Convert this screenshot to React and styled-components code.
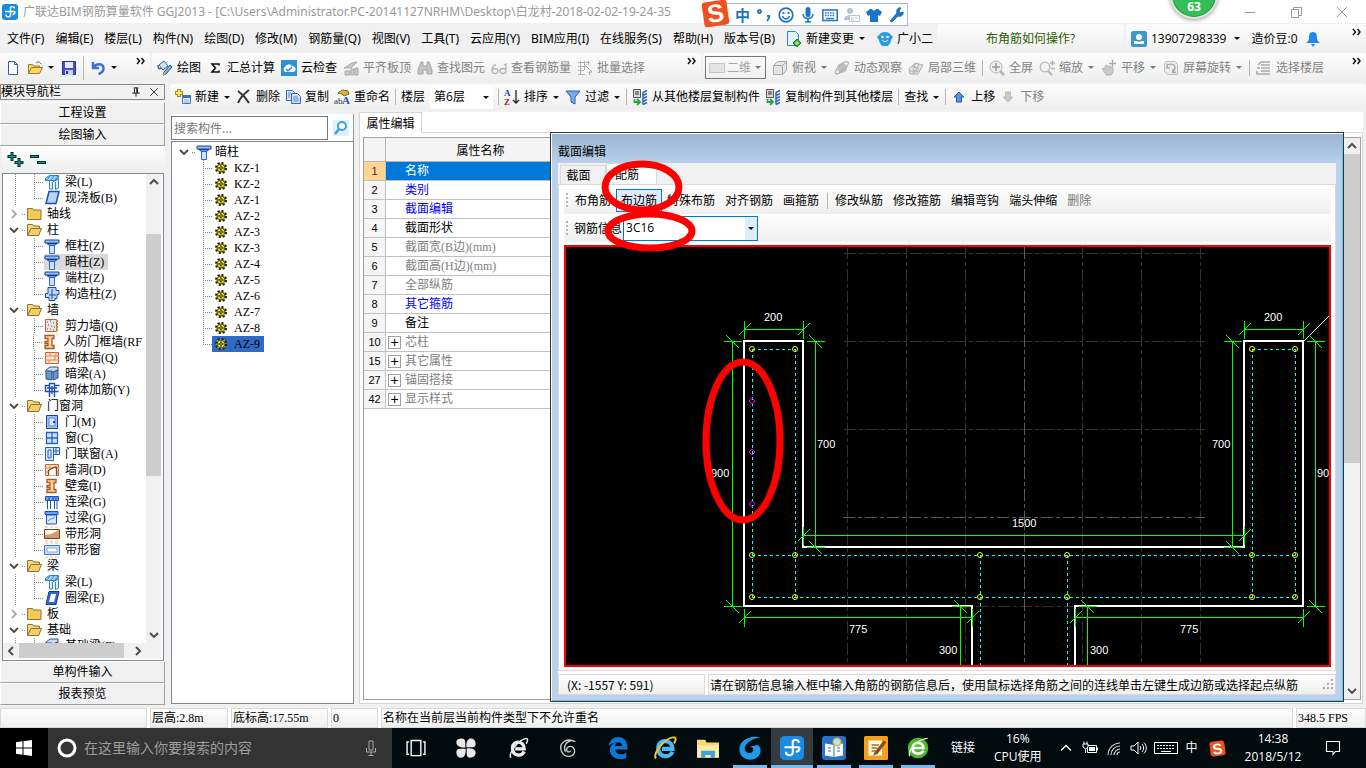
import styled, { createGlobalStyle } from 'styled-components';

const ui = '"Open Sans", "Noto Sans CJK SC", sans-serif';
const wide = '"Noto Sans", "Noto Sans CJK SC", sans-serif';
const song = '"Liberation Serif", "Noto Sans CJK SC", serif';

const GlobalStyle = createGlobalStyle`
  * { box-sizing: border-box; }
  body { margin: 0; background: #f0f0f0; overflow: hidden; }
  button, input, select { font: inherit; color: inherit; margin: 0; padding: 0; border: 0; background: none; border-radius: 0; }
  ul { list-style: none; margin: 0; padding: 0; }
  svg { display: block; flex: none; }
`;

/* ---------- icons ---------- */

const column = (
  <>
    <path d="M1 2h14v3H1z" fill="#9cc3f5" stroke="#16419c" />
    <path d="M3 5.500h10l-2 2H5z" fill="#5f93e6" stroke="#16419c" />
    <path d="M5.500 7.500h5v8h-5z" fill="#cfe2ff" stroke="#2d66c9" />
  </>
);
const brick = (
  <>
    <path d="M1.500 2.500h13v11h-13z" fill="#fde3cd" stroke="#c4602c" />
    <path d="M1 6h14M1 10h14M6 2v4M11 6v4M5 10v4M12 2v4" stroke="#d98350" />
  </>
);
const beam = (
  <>
    <path d="M1.500 4l4-2.500h9v3l-3 2h-10z" fill="#a9d6f7" stroke="#2a7fc4" />
    <path d="M5.500 7v8h3V8l6-3v9l-3 1.500V8" fill="#dff0fc" stroke="#2a7fc4" />
    <path d="M3 6l3-4M7 6l3-4M11 6l3-4" stroke="#2a7fc4" />
  </>
);

const icons = {
  app: (
    <>
      <rect width="16" height="16" rx="3" fill="#1b8be0" />
      <path d="M8.500 3v8c0 2.500-4.500 2.500-4.500-.5M3 7.500h10M8.500 3.500c1-1.500 4-1 4 1M13 7.500c0 2-1 3-2.500 3" fill="none" stroke="#fff" strokeWidth="1.400" />
    </>
  ),
  newDoc: <path d="M3.500 1.500h6l3 3v10h-9zM9.500 1.500v3h3" fill="#fff" stroke="#3b5b93" />,
  open: (
    <>
      <path d="M1.500 13V4.500h4l1 1.500h6v2" fill="#f9d675" stroke="#a8791b" />
      <path d="M1.500 13.500l3-6h11l-3 6z" fill="#ffd466" stroke="#a8791b" />
      <path d="M9 3c2-2 4-1 5 1" fill="none" stroke="#555" />
    </>
  ),
  save: (
    <>
      <path d="M1.500 1.500h13v13h-13z" fill="#4a4fc4" stroke="#2b2f8f" />
      <path d="M4 2h8v6H4z" fill="#e7eafc" />
      <path d="M4 10h8v5H4z" fill="#c9cdf5" /><path d="M5 11h2v3H5z" fill="#2b2f8f" />
    </>
  ),
  undo: <path d="M3 2v6h6M3.500 7.500c3-5 10-4 10 1 0 3-2 4.500-5 5.500" fill="none" stroke="#3d72d8" strokeWidth="2.500" />,
  paint: (
    <>
      <path d="M2 5l5-4 4 5-5 4z" fill="#cfe0f2" stroke="#44627f" />
      <path d="M1 5c0 3 1 5 3 3" fill="none" stroke="#44627f" strokeWidth="1.500" />
      <path d="M7 12l6-7 2 2-6 7-3 1z" fill="#7fb1e8" stroke="#2c568c" /><path d="M6 15l1-3 2 2z" fill="#e8bd32" />
    </>
  ),
  sigma: <path d="M12 5.500V4H5l3.500 4L5 12h7v-1.500" fill="none" stroke="#111" strokeWidth="1.600" />,
  cloud: (
    <>
      <path d="M0 0h16v16H0z" fill="#2c90d9" />
      <path d="M4 12a3 3 0 010-5 4 4 0 017-1 3 3 0 011 6z" fill="#fff" /><path d="M5 9l2 2 4-4" fill="none" stroke="#2c90d9" strokeWidth="1.500" />
    </>
  ),
  slab: <path d="M1 8l8-5 5-1-6 6zM2 11h5v4H2zM8 9h3v6H8zM12 8h3v7h-3z" fill="#c9c9c9" stroke="#a8a8a8" />,
  binoculars: <path d="M4 2h2v4h4V2h2l3 8v4h-5v-4H6v4H1v-4z" fill="#c4c4c4" stroke="#a6a6a6" />,
  glasses: <path d="M1 11a3 2.500 0 016 0 3 2.500 0 01-6 0c0-4 2-6 4-6M9 11a3 2.500 0 016 0 3 2.500 0 01-6 0M15 10V4l-2 1" fill="none" stroke="#b2b2b2" strokeWidth="1.300" />,
  batch: (
    <>
      <path d="M1 2.500h12M1 6.500h8M1 10.500h6M1 14.500h7M3.500 1v14M7.500 1v9M11.500 1v4" fill="none" stroke="#b0b0b0" />
      <path d="M9 6l6 6h-3l1 3" fill="#fff" stroke="#999" />
    </>
  ),
  flat: <path d="M.5 3.500h15v9H.5z" fill="#e3e3e3" stroke="#c4c4c4" />,
  cube: <path d="M1.500 5.500l4-4h9v9l-4 4h-9zM1.500 5.500h9v9M10.500 5.500l4-4" fill="#e4e4e4" stroke="#a9a9a9" />,
  orbit: (
    <>
      <circle cx="8" cy="8" r="5" fill="#c2c2c2" /><path d="M2 14c-3-3 8-14 12-12 2 2-7 12-12 12" fill="none" stroke="#b0b0b0" strokeWidth="1.300" />
    </>
  ),
  local3d: <path d="M1 9l6-6 8 2-5 9-8 0zM4 6l7 3M7 3l-2 11M11 4l-4 9M2 11l9 0" fill="#e2e2e2" stroke="#b0b0b0" />,
  fullView: (
    <>
      <circle cx="7" cy="7" r="6" fill="#eee" stroke="#b5b5b5" /><path d="M7 3v8M3 7h8" stroke="#999" strokeWidth="1.500" /><path d="M11 11l4 4" stroke="#b5b5b5" strokeWidth="2.500" />
    </>
  ),
  zoom: (
    <>
      <circle cx="6" cy="7" r="4.800" fill="#f5f5f5" stroke="#b8b8b8" strokeWidth="1.300" /><path d="M9 11l4 4" stroke="#b5b5b5" strokeWidth="2.300" /><path d="M11 3h5M13.500 .5v5M12 8.500h4" stroke="#b0b0b0" strokeWidth="1.500" />
    </>
  ),
  pan: (
    <>
      <path d="M1 8l3 1V6l2-1 1 2 2-1 3 2v4l-2 3H5z" fill="#c8c8c8" stroke="#b5b5b5" /><path d="M11.500 0v7M8 3.500h7" stroke="#aaa" strokeWidth="1.300" />
    </>
  ),
  rotate: (
    <>
      <path d="M3 1.500h9l2.500 3v10H5l-3.500-3V4z" fill="#eee" stroke="#bcbcbc" />
      <path d="M4 7c0-4 8-4 8 1 0 2-1 3-3 4M10 9v3.500h3M4 3.500V8h3" fill="none" stroke="#a8a8a8" strokeWidth="1.400" />
    </>
  ),
  floors: <path d="M2 5l3-3h9M5 5h9M5 8h9M1 8h3M5 11h9M1 11v3h13" fill="none" stroke="#aaa" strokeWidth="1.500" />,
  create: (
    <>
      <path d="M4 0v8M0 4h8" stroke="#a8871c" strokeWidth="4" /><path d="M4 1v6M1 4h6" stroke="#ffe95c" strokeWidth="2" />
      <path d="M7.500 6.500h8v8h-8z" fill="#eaf2fd" stroke="#3f74bd" /><path d="M7 6h9v3H7z" fill="#3f74bd" /><path d="M9 11h5M9 13h5" stroke="#7da3d4" />
    </>
  ),
  remove: <path d="M2 2c4 3 8 7 11 12M13 1C9 4 4 9 2 14" fill="none" stroke="#333" strokeWidth="2" />,
  copy: (
    <>
      <path d="M1.500 1.500h6l2 2v8h-8z" fill="#d8e6fb" stroke="#3766b1" /><path d="M6.500 4.500h6l3 3v7h-9z" fill="#d8e6fb" stroke="#3766b1" /><path d="M8 8h5M8 10h6M8 12h6M3 4h3M3 6h2M3 8h2" stroke="#5a88d0" />
    </>
  ),
  rename: (
    <>
      <path d="M4 4l4-3 6 1 1 3-5 2-2-2z" fill="#dbb443" stroke="#81661d" />
      <text x="0" y="15" fontSize="9" fontFamily="Liberation Serif" fill="#333">ab</text><text x="8" y="15" fontSize="11" fontWeight="bold" fontFamily="Liberation Serif" fill="#2753a8">A</text>
    </>
  ),
  sort: (
    <>
      <text x="0" y="7" fontSize="9" fontWeight="bold" fontFamily="Liberation Serif" fill="#1c3f9c">A</text><text x="0" y="16" fontSize="9" fontWeight="bold" fontFamily="Liberation Serif" fill="#9c1c2c">Z</text>
      <path d="M12 1v13M9 11l3 3 3-3" fill="none" stroke="#222" strokeWidth="1.300" />
    </>
  ),
  filter: <path d="M1 2h14l-5 6v7l-4-2V8z" fill="#79a9f0" stroke="#2a5cb8" />,
  copyFloor: (
    <>
      <path d="M1.500 .5h7v8h-7z" fill="#ddd" stroke="#555" /><path d="M3 3h4M3 5h4" stroke="#333" />
      <path d="M11 3.500l4-2M11 6.500l4-2M11 9.500l4-2M11 12.500l4-2M11 15.500l4-2M11 3v12.500" stroke="#2c69bd" strokeWidth="1.500" fill="none" />
      <path d="M2.500 10v3h4M5 10l3 3-3 3" fill="none" stroke="#2ea043" strokeWidth="1.800" />
    </>
  ),
  up: <path d="M8 3l5 5h-2.500v5h-5V8H3z" fill="#5c8fe8" stroke="#2a55ae" />,
  down: <path d="M8 13L3 8h2.500V3h5v5H13z" fill="#c9c9c9" stroke="#bdbdbd" />,
  change: (
    <>
      <path d="M1.500 .5h8l3 3v11h-11z" fill="#e2f3fc" stroke="#2d87b8" /><path d="M11 8l4 4-4 4-4-4z" fill="#3fae2a" stroke="#207912" /><path d="M11 10v4M9 12h4" stroke="#c7f2b8" />
    </>
  ),
  mascot: (
    <>
      <path d="M2 4c2-4 10-4 12 0l2 2-2 3c0 3-2 4-3 6H5C4 13 2 12 2 9L0 6z" fill="#2b9be0" /><circle cx="5.500" cy="6" r="1.300" fill="#fff" /><circle cx="10.500" cy="6" r="1.300" fill="#fff" /><path d="M5 9c2 2 4 2 6 0" fill="none" stroke="#fff" />
    </>
  ),
  user: (
    <>
      <rect width="16" height="16" rx="2" fill="#3d97cf" /><circle cx="8" cy="6" r="3" fill="#fff" /><path d="M3 13V10h3l2 1 2-1h3v3z" fill="#fff" />
    </>
  ),
  bell: <path d="M8 1c4 0 4 4 4 6 0 3 2 4 3 5H1c1-1 3-2 3-5 0-2 0-6 4-6zM6 13h4l-2 3z" fill="#1e88f0" />,
  search: (
    <>
      <path d="M0 0h16v16H0z" fill="#e0f1fc" /><circle cx="9" cy="6" r="4" fill="#fff" stroke="#3e9ede" strokeWidth="2" /><path d="M6 9l-4 5" stroke="#3e9ede" strokeWidth="2.500" />
    </>
  ),
  folder: <path d="M1.500 13.500v-11h5l1 1.500h7.500v9.500z" fill="#f4c95a" stroke="#94702a" />,
  folderOpen: (
    <>
      <path d="M1.500 13V2.500h5l1 1.500h6v3" fill="#f7d57c" stroke="#94702a" /><path d="M1.500 13.500L5 6.500h10.500l-3 7z" fill="#f7cf66" stroke="#94702a" />
    </>
  ),
  column,
  brick,
  beam,
  plate: <path d="M5 1.500h10l-3 12H2z" fill="#b9d2f8" stroke="#1c50ac" strokeWidth="1.500" />,
  ringBeam: (
    <>
      <path d="M5 1.500h10l-3 13H2z" fill="#3468c0" stroke="#123b8c" /><path d="M7 4h5l-2 8H5z" fill="#fff" />
    </>
  ),
  gearCol: <path d="M4 1.500h8v3h3v4h-2v4h-2v2H5v-3H1.500v-4H4z M5 9h7M8 3v10" fill="#bdd4f7" stroke="#1c4ba6" />,
  shear: (
    <>
      <path d="M1.500 1.500h11v12h-11z" fill="#e5e5e5" stroke="#c4602c" /><path d="M3 4h1M6 3h1M9 5h1M4 7h1M7 8h1M10 9h1M3 11h1M6 11h1M9 12h1" stroke="#555" /><path d="M13 2v12" stroke="#e08030" strokeWidth="2" strokeDasharray="2 1" />
    </>
  ),
  niche: <path d="M3 1.500h9v3h-2v7h2v3H3v-3h3v-2H3v-2h3v-3H3z" fill="#fbd6a8" stroke="#a65a1c" strokeWidth="1.300" />,
  hiddenBeam: (
    <>
      <path d="M2 4l4-3h8v3l-5 2H2z" fill="#c9dcf2" stroke="#29558c" /><path d="M2 5h6v9l-6-1zM9 6l5-2v8l-5 2z" fill="#6c95c4" stroke="#29558c" />
    </>
  ),
  rebarWall: <path d="M1.500 3.500h4v-2h5v2h5M1.500 9.500h13M5.500 1v14M10.500 1v14M1.500 3v7M3 6h10M8 4v8" fill="none" stroke="#1d4fb0" strokeWidth="1.400" />,
  door: (
    <>
      <path d="M2.500 1.500h11v13h-11z" fill="#9cc3f5" stroke="#16419c" /><path d="M5 4h6v8H5z" fill="#dbe9fd" stroke="#5a88d0" /><path d="M9 8h2" stroke="#16419c" strokeWidth="2" />
    </>
  ),
  win: <path d="M2.500 2.500h11v11h-11zM8 2v12M2 8h12" fill="#cfe4fb" stroke="#2565c4" strokeWidth="1.300" />,
  doorWin: <path d="M1.500 1.500h8v13h-8zM9.500 1.500h6v7h-6M12 1v7M10 5h6M4 4h3v8H4z" fill="#dbe9fd" stroke="#2461c0" />,
  wallHole: (
    <>
      {brick}
      <path d="M4.500 13.500v-5l5-3h3v8" fill="#fff" stroke="#7a4a1c" strokeWidth="1.300" />
    </>
  ),
  linkBeam: <path d="M1.500 2.500h13v4h-13zM3.500 7v8M6.500 7v8M10.500 7v8M13 7v8M5 3v3M9 3v3M12 3v3" fill="#6f9eea" stroke="#1e52b4" />,
  lintel: (
    <>
      <path d="M1 1.500h13v3H1z" fill="#6f9eea" stroke="#1e52b4" /><path d="M2.500 5h10v9h-10z" fill="#d7e7fd" stroke="#1e52b4" /><path d="M4 11c2-3 4-1 7-4" fill="none" stroke="#5a88d0" />
    </>
  ),
  stripHole: (
    <>
      <path d="M.5 3.500h15v9H.5z" fill="#fff" stroke="#7d3f10" /><path d="M1 9l6-1 8-4v8H1z" fill="#d69a68" /><path d="M1 1h14M1 15h14" stroke="#f5b9a0" strokeDasharray="3 2" />
    </>
  ),
  stripWin: (
    <>
      <path d="M.5 3.500h15v9H.5z" fill="#cfe0fa" stroke="#3b70d0" /><path d="M3 6h10v4H3z" fill="#fff" stroke="#7ea6e8" /><path d="M1 1h14M1 15h14" stroke="#f5b9a0" strokeDasharray="3 2" />
    </>
  ),
  gear: (
    <>
      <circle cx="8" cy="8" r="5.500" fill="#e6dc25" stroke="#222" strokeWidth="3" strokeDasharray="2.300 2" />
      <circle cx="8" cy="8" r="4.500" fill="#e6dc25" stroke="#4a4712" />
      <path d="M8 4v8M4 8h8" stroke="#4a4712" /><circle cx="8" cy="8" r="1.500" fill="#e6dc25" stroke="#222" />
    </>
  ),
  addNode: (
    <>
      <path d="M5 0v9M.5 4.500h9M12 6v9M7.500 10.500h9" stroke="#032f2b" strokeWidth="3" /><path d="M5 1v7M1.500 4.500h7M12 7v7M8.500 10.500h7" stroke="#12a197" />
    </>
  ),
  delNode: (
    <>
      <path d="M0 4.500h9M7 10.500h9" stroke="#032f2b" strokeWidth="3" /><path d="M1 4.500h7M8 10.500h7" stroke="#12a197" />
    </>
  ),
  more: <path d="M3 4l2.500 3L3 10M7.500 4L10 7l-2.500 3" fill="none" stroke="#111" strokeWidth="1.500" />,
  chevronDown: <path d="M4 6l4 4 4-4" fill="none" stroke="#4a4a4a" strokeWidth="1.900" />,
  chevronRight: <path d="M6 4l4 4-4 4" fill="none" stroke="#a0a0a0" strokeWidth="1.700" />,
  arrowUp: <path d="M4 10l4-4 4 4" fill="none" stroke="#505050" strokeWidth="2" />,
  arrowLeft: <path d="M10 4L6 8l4 4" fill="none" stroke="#505050" strokeWidth="2" />,
  arrowRight: <path d="M6 4l4 4-4 4" fill="none" stroke="#505050" strokeWidth="2" />,
  pin: <path d="M5 2.500h6M6 3v6M10 3v6M9 3v6M3 9.500h10M8 10v4" fill="none" stroke="#111" strokeWidth="1.300" />,
  close: <path d="M3 3l10 10M13 3L3 13" stroke="#222" strokeWidth="1.200" />,
  winMin: <path d="M3 8.500h10" stroke="#999" />,
  winMax: <path d="M3.500 5.500h7v8h-7zM5.500 5V3.500h8v8H11" fill="none" stroke="#999" />,
  winClose: <path d="M3 3l10 10M13 3L3 13" stroke="#999" />,
  // input method bar
  smile: (
    <>
      <circle cx="8" cy="8" r="6.800" fill="none" stroke="#1d74c6" strokeWidth="1.700" /><path d="M5.500 5v2M10.500 5v2" stroke="#1d74c6" strokeWidth="1.800" /><path d="M4.500 9c1.500 4 5.500 4 7 0" fill="none" stroke="#1d74c6" strokeWidth="1.500" />
    </>
  ),
  mic: (
    <>
      <rect x="5.500" y="0" width="5" height="10" rx="2.500" fill="#1d74c6" /><path d="M3 7c0 6 10 6 10 0M8 12v3M5 15h6" fill="none" stroke="#1d74c6" strokeWidth="1.600" />
    </>
  ),
  keyboard: (
    <>
      <path d="M.8 3h14.400v10.500H.8z" fill="none" stroke="#1d74c6" strokeWidth="1.500" /><path d="M3 6h10M3 8.500h10" stroke="#1d74c6" strokeWidth="1.400" strokeDasharray="1.500 1" /><path d="M4 11.500h8" stroke="#1d74c6" strokeWidth="1.300" />
    </>
  ),
  person: (
    <>
      <circle cx="6" cy="4" r="3" fill="#b5c3d6" /><path d="M0 13c0-6 10-6 11-3v3z" fill="#b5c3d6" /><path d="M5.500 8.500h10v6h-10z" fill="#fff" stroke="#b5c3d6" /><path d="M7 11h3M11 11h3M7 13h3" stroke="#b5c3d6" />
    </>
  ),
  shirt: <path d="M4 2h2c1 2 3 2 4 0h2l4 3-2 4-2-1v7H4V8L2 9 0 5z" fill="#1d74c6" />,
  wrench: <path d="M2 14l7-8c-1-3 1-6 4-5l-2 3 1 2 3-1c1 3-2 5-5 4l-6 6z" fill="#1d74c6" stroke="#1d74c6" />,
  comma: <path d="M3.500 3a1.500 1.500 0 11-.1 0M11 9h2v2l-2 3" fill="none" stroke="#1d74c6" strokeWidth="1.800" />,
  // taskbar
  start: <path d="M0 2.300l6.500-1v6.200H0zM7.500 1.200L16 0v7.500H7.500zM0 8.500h6.500v6.200L0 13.700zM7.500 8.500H16V16l-8.500-1.200z" fill="#fff" />,
  micLine: <path d="M6 1h4v9H6zM3.500 8v4h9V8M8 12v3M5.500 15.500h5" fill="none" stroke="#aaa" />,
  taskView: <path d="M4.500 2.500h7v11h-7zM3 3.500H1.500v9H3M13 3.500h1.500v9H13" fill="none" stroke="#fff" />,
  fan: (
    <>
      <path d="M7.500 7.700C4 8 1 6.500 1 4s2-3 4-3c3 0 2.500 3 2.500 6.700z" fill="#e9e9e9" />
      <path d="M8.300 7.500C8 4 9 1 11.500 1s3.500 2 3.500 4c0 3-3 2.500-6.700 2.500z" fill="#e9e9e9" />
      <path d="M8.500 8.300C12 8 15 9 15 11.500S13 15 11 15c-3 0-2.500-3-2.500-6.700z" fill="#e9e9e9" />
      <path d="M7.700 8.500C8 12 7 15 4.500 15S1 13 1 11c0-3 3-2.500 6.700-2.500z" fill="#e9e9e9" />
    </>
  ),
  eWhite: (
    <>
      <path d="M12.500 10.500c-2 4-8.500 3.500-8.500-2.500s8.500-5.500 8.500.6H6" fill="none" stroke="#eee" strokeWidth="2.400" /><path d="M3 15C0 13 8 2 14 1c1.500 0 1 2 0 4" fill="none" stroke="#eee" />
    </>
  ),
  spiral: <path d="M14 3C6-1 0 5 3 11s12 4 10-2C11 5 6 7 7 10c1 2 3 1 3 0M11 2C6 3 4 7 6 11" fill="none" stroke="#ccc" strokeWidth="1.100" />,
  edge: <path d="M1 7C2 2 5 0 8 0c5 0 7 4 7 9H6c0 3 4 5 8 2.500V15C8 18 2 14.500 2 9.500 2 6 5 4 8 4 4 4 2 5.500 1 7zM6 6.500h5C11 3 6 3 6 6.500z" fill="#0a78d6" />,
  ie: (
    <>
      <path d="M13 10.500c-2 4.500-9.500 4-9.500-2.500s9.500-6 9.500.6H6" fill="none" stroke="#4cb6ef" strokeWidth="2.800" /><path d="M2 15C-1 12 9 0 14.500 1c1.500 1 0 3-.5 4" fill="none" stroke="#f2c633" strokeWidth="1.300" />
    </>
  ),
  explorer: (
    <>
      <path d="M0 2h6l1 2h9v11H0z" fill="#f7d774" /><path d="M0 6h16v9H0z" fill="#fce9a5" /><path d="M3 15v-5h10v5h-3v-2H6v2z" fill="#3ea2e0" />
    </>
  ),
  swirl: <path d="M15 1C7-1 0 4 1 10s9 8 13 3c2-3 1-6-1-7l-5 1 2 1c1 3-3 5-5 2S7 2 15 1z" fill="#1c9bea" />,
  book: (
    <>
      <rect width="16" height="16" rx="2" fill="#2673c9" /><path d="M2 5l6 1 6-1v8l-6 1-6-1z" fill="#fff" /><path d="M8 6v8M4 8h2M4 10h2M10 8h2M10 10h2" stroke="#6aa0de" /><circle cx="10" cy="4" r="2.500" fill="#bfe3fb" stroke="#e2b13c" />
    </>
  ),
  note: (
    <>
      <rect width="16" height="16" rx="1" fill="#f5a11b" /><path d="M3 3h9v10H3z" fill="#fffbe8" /><path d="M5 6h5M5 8h4M5 10h3" stroke="#a8721c" /><path d="M7 11l6-8 2 1-6 8-3 1z" fill="#8a4b16" />
    </>
  ),
  eGreen: (
    <>
      <circle cx="8" cy="8" r="7.500" fill="#4cb82e" /><path d="M4 8h8c0-5-8-5-8 0s6 5 8 2" fill="none" stroke="#fff" strokeWidth="1.900" /><path d="M2 14C0 9 9 1 15 1" fill="none" stroke="#d9f2d0" />
    </>
  ),
  caret: <path d="M3 10.500l5-5 5 5" fill="none" stroke="#fff" strokeWidth="1.300" />,
  battery: (
    <>
      <path d="M5.500 5.500h9v7h-9zM15.500 7.500v3" fill="none" stroke="#fff" /><path d="M7 7h6v4H7z" fill="#fff" /><path d="M1 4h5v3L3.500 9 1 7zM2 1.500V4M5 1.500V4M3.500 9v4" fill="#02090c" stroke="#fff" />
    </>
  ),
  wifi: <path d="M2 15C2 8 8 3 14 3M5 15c0-5 4-9 9-9M8 15c0-3 3-6 6-6M11 15c0-2 1-3 3-3" fill="none" stroke="#ddd" strokeWidth="1.100" />,
  speaker: <path d="M1 6h3l4-4v12l-4-4H1zM10 6c1 1 1 3 0 4M12 4c2 2 2 6 0 8M14 2.500c3 3 3 8 0 11" fill="none" stroke="#fff" />,
  keyLine: (
    <>
      <path d="M-3.500 2.500h23v11h-23z" fill="none" stroke="#fff" /><path d="M-1 5.500h18M-1 8.500h18" stroke="#fff" strokeDasharray="2 1" /><path d="M3 11.500h10" stroke="#fff" />
    </>
  ),
  notice: <path d="M1.500 1.500h13v10h-4l-2.500 3v-3h-6.500z" fill="none" stroke="#fff" strokeWidth="1.100" />,
};

const Icon = ({ name, size = 16 }) => (
  <svg width={size} height={size} viewBox="0 0 16 16" overflow="visible" aria-hidden="true">{icons[name]}</svg>
);

const Caret = styled.span`
  width: 0;
  height: 0;
  margin: 0 ${(p) => p.$space || 1}px;
  border: 3px solid transparent;
  border-top-color: ${(p) => (p.$off ? '#777' : '#111')};
  border-bottom: 0;
`;

/* ---------- window frame ---------- */

const Window = styled.div`
  position: relative;
  display: flex;
  flex-direction: column;
  height: 100vh;
  overflow: hidden;
  font: 12px/16px ${ui};
  color: #000;
  white-space: nowrap;
`;
const TitleBar = styled.header`
  display: flex;
  align-items: center;
  gap: 5px;
  flex: 0 0 23px;
  padding: 0 16px 0 2px;
  background: #fff;
  color: #999;
  font-family: ${wide};
`;
const WindowButtons = styled.div`
  display: flex;
  gap: 30px;
  margin-left: auto;
`;
const ImeBar = styled.div`
  position: absolute;
  top: 3px;
  left: 716px;
  display: flex;
  align-items: center;
  gap: 6px;
  height: 23px;
  padding: 0 3px 0 18px;
  border: 1px solid #a9bdd6;
  background: #fff;
  color: #1d74c6;
  font-weight: bold;
  font-size: 15px;
`;
const SogouLogo = styled.span`
  display: grid;
  place-items: center;
  width: ${(p) => p.$size}px;
  height: ${(p) => p.$size}px;
  border-radius: 3px;
  background: #f0501e;
  color: #fff;
  font: bold ${(p) => p.$size}px/1 "Liberation Sans", sans-serif;
  transform: rotate(-8deg);
`;
const LogoSpot = styled.div`
  position: absolute;
  top: -3px;
  left: -14px;
`;
const SpeedBall = styled.div`
  position: absolute;
  top: -29px;
  right: 148px;
  display: flex;
  align-items: flex-end;
  justify-content: center;
  width: 48px;
  height: 48px;
  padding-bottom: 4px;
  border: 2px solid #dfe8e0;
  border-radius: 50%;
  background: #36bd55;
  box-shadow: 0 1px 4px #999, inset 0 0 0 1px #1f9a40;
  color: #fff;
  font-weight: bold;
  line-height: 12px;
`;

/* ---------- menus and toolbars ---------- */

const Bar = styled.div`
  display: flex;
  gap: 2px;
  flex: 0 0 ${(p) => p.$height}px;
  padding: ${(p) => (p.$foot ? `0 0 ${p.$foot}px` : '1px 0 0')};
`;
const Strip = styled.div`
  display: flex;
  align-items: center;
  gap: ${(p) => p.$gap ?? 6}px;
  flex: ${(p) => (p.$width ? `0 0 ${p.$width}px` : '1 1 0')};
  min-width: 0;
  padding: 0 5px 0 ${(p) => p.$pad ?? 5}px;
  border-radius: 3px;
  background: ${(p) => (p.$plain ? 'none' : 'linear-gradient(#fcfcfc, #eeeeee)')};
  overflow: hidden;
`;
const MenuStrip = styled(Strip)`
  font-family: ${wide};
`;
const Tool = styled.button`
  display: flex;
  align-items: center;
  gap: 4px;
  height: 22px;
  white-space: nowrap;
  color: ${(p) => (p.disabled ? '#838383' : '#000')};
`;
const Rule = styled.span`
  width: 1px;
  height: ${(p) => p.$height || 16}px;
  background: #b4b4b4;
`;
const More = styled.button`
  align-self: flex-start;
  margin: 1px -5px 0 auto;
`;
const Hint = styled.a`
  margin: 0 auto;
  color: #2c5c00;
  text-decoration: none;
`;
const ViewBox = styled.div`
  display: grid;
  align-items: center;
  width: 61px;
  height: 23px;
  border: 1px solid #777;
  color: #838383;
  > * { grid-area: 1 / 1; }
  > svg { margin-left: 3px; }
  > span { justify-self: end; margin-right: 4px; }
  > select { appearance: none; width: 100%; height: 100%; padding-left: 21px; }
`;
const FloorBox = styled(ViewBox)`
  width: 63px;
  border: 0;
  background: #fff;
  color: #000;
  > select { padding-left: 4px; }
`;

/* ---------- module navigator ---------- */

const Body = styled.div`
  display: flex;
  flex: 1 1 0;
  min-height: 0;
`;
const Navigator = styled.nav`
  display: flex;
  flex-direction: column;
  flex: 0 0 165px;
  margin-bottom: 3px;
  font-family: ${song};
`;
const NavTitle = styled.div`
  display: flex;
  align-items: center;
  gap: 6px;
  height: 16px;
  padding-right: 4px;
  margin-bottom: 2px;
  border: 1px solid #888;
  > span { flex: 1; }
`;
const NavButton = styled.button`
  flex: 0 0 22px;
  border: 1px solid #a0a0a0;
  border-color: #fff #a0a0a0 #a0a0a0 #fff;
  background: #f0f0f0;
`;
const NavTools = styled.div`
  display: flex;
  align-items: center;
  gap: 7px;
  flex: 0 0 27px;
  margin-left: 2px;
  padding-left: 5px;
  background: linear-gradient(#fdfdfd, #eee);
`;
const TreeBox = styled.div`
  display: grid;
  grid-template: minmax(0, 1fr) 15px / minmax(0, 1fr) 15px;
  flex: 1 1 0;
  min-height: 0;
  margin: 0 1px 0 2px;
  padding: 0 2px 2px 0;
  border: 1px solid #828790;
  background: #fff;
`;
const Tree = styled.ul`
  overflow: hidden;
  padding-left: 3px;
`;
const dots = 'repeating-linear-gradient(#888 0 1px, transparent 1px 2px)';
const hdots = 'repeating-linear-gradient(90deg, #888 0 1px, transparent 1px 2px)';
const TreeRow = styled.li`
  display: flex;
  align-items: center;
  height: 16px;
`;
const Trunk = styled.span`
  width: ${(p) => p.$width}px;
  margin-left: ${(p) => p.$left}px;
  height: 16px;
  background: ${dots} 0 0 / 1px 16px no-repeat;
`;
const Branch = styled.span`
  width: ${(p) => p.$width}px;
  margin-left: ${(p) => p.$left || 0}px;
  height: 16px;
  background: ${dots} 0 0 / 1px ${(p) => (p.$last ? 8 : 16)}px no-repeat, ${hdots} 0 8px / 100% 1px no-repeat;
`;
const Stub = styled.span`
  width: 4px;
  height: 1px;
  background: ${hdots};
`;
const Leaf = styled.span`
  display: flex;
  align-items: center;
  gap: ${(p) => p.$gap || 5}px;
  height: 16px;
  padding: 0 4px 0 ${(p) => p.$pad || 0}px;
  background: ${(p) => p.$bg || 'none'};
`;
const Scroll = styled.div`
  display: flex;
  flex-direction: ${(p) => (p.$across ? 'row' : 'column')};
  align-items: center;
  background: #f0f0f0;
`;
const Thumb = styled.span`
  flex: ${(p) => p.$size} 1 0;
  align-self: stretch;
  background: #cdcdcd;
`;
const Space = styled.span`
  flex: ${(p) => p.$size} 1 0;
`;

/* ---------- component list ---------- */

const Workspace = styled.main`
  display: flex;
  flex-direction: column;
  flex: 1 1 0;
  min-width: 0;
  padding-left: 5px;
`;
const Columns = styled.div`
  display: flex;
  gap: 5px;
  flex: 1 1 0;
  min-height: 0;
`;
const Parts = styled.section`
  display: flex;
  flex-direction: column;
  flex: 0 0 183px;
  margin: 2px 0 4px 1px;
  font-family: ${song};
`;
const SearchRow = styled.div`
  display: flex;
  align-items: center;
  gap: 5px;
  flex: 0 0 27px;
  background: #fff;
  border-right: 1px solid #999;
  > input { width: 157px; height: 24px; padding: 0 2px; border: 1px solid #777; font: 12px/16px "Noto Sans CJK SC", sans-serif; }
  > input::placeholder { color: #777; }
`;
const PartsTree = styled.ul`
  flex: 1;
  && { padding: 2px 0 0 4px; }
  border: 1px solid #828790;
  background: #fff;
`;

/* ---------- property grid ---------- */

const Properties = styled.section`
  position: relative;
  display: flex;
  flex-direction: column;
  flex: 1 1 0;
  min-width: 0;
  margin-right: 3px;
  font-family: "Noto Sans CJK SC", sans-serif;
`;
const TabStrip = styled.div`
  display: flex;
  height: 21px;
  border-bottom: 1px solid #d5d5d5;
  background: #fff;
`;
const PageTab = styled.button`
  width: 63px;
  height: 21px;
  border: 1px solid #d5d5d5;
  border-bottom-color: #fff;
  background: #fff;
`;
const GridPane = styled.div`
  display: flex;
  flex: 1;
  padding-left: 3px;
  margin-bottom: 4px;
  border: 1px solid #d5d5d5;
  border-top: 0;
  background: #fff;
`;
const GridFrame = styled.div`
  display: flex;
  flex: 1;
  margin: 4px 1px 3px 0;
  border: 1px solid #a0a0a0;
`;
const Grid = styled.table`
  flex: 1;
  align-self: flex-start;
  display: table;
  width: 100%;
  border-spacing: 0;
  table-layout: fixed;
`;
const Head = styled.th`
  width: ${(p) => p.$width || 'auto'};
  height: 24px;
  padding: 0;
  border: solid #b4b4b4;
  border-width: 0 1px 1px 0;
  background: #f4f4f4;
  font-weight: normal;
`;
const NumCell = styled.td`
  height: 19px;
  padding: 0;
  border: solid #c0c0c0;
  border-width: 0 1px 1px 0;
  background: ${(p) => (p.$on ? '#ffd591' : '#f5f5f5')};
  color: ${(p) => (p.$on ? '#60104a' : '#000')};
  font: 11px/16px "Liberation Sans", sans-serif;
  text-align: center;
`;
const tones = { on: '#fff', blue: '#0000ff', black: '#000', gray: '#808080' };
const NameCell = styled.td`
  height: 19px;
  padding: 0 0 0 2px;
  border: solid #c0c0c0;
  border-width: 0 1px 1px 0;
  background: ${(p) => (p.$tone === 'on' ? '#0078d7' : '#fff')};
  color: ${(p) => tones[p.$tone]};
  font-family: ${song};
  line-height: 16px;
`;
const CellRow = styled.div`
  display: flex;
  align-items: center;
  gap: 4px;
  padding-left: ${(p) => (p.$plain ? 17 : 0)}px;
`;
const Expand = styled.button`
  width: 13px;
  height: 13px;
  border: 1px solid #a0a0a0;
  color: #000;
  font: 14px/10px "Liberation Sans", sans-serif;
`;

/* ---------- section editor dialog ---------- */

const Dialog = styled.div`
  position: absolute;
  inset: 20px 19px 6px 191px;
  display: flex;
  flex-direction: column;
  padding: 0 7px 6px 7px;
  border: 1px solid #333;
  background: linear-gradient(#99b4d1, #b9d1ea 30px);
  box-shadow: inset 1px 1px #fff, inset -1px -1px #58cdf0;
  font-family: ${ui};
`;
const DialogTitle = styled.div`
  flex: 0 0 30px;
  padding-top: 11px;
`;
const DialogTabs = styled.div`
  display: flex;
  align-items: flex-end;
  flex: 0 0 21px;
  padding-left: 2px;
  background: #f0f0f0;
`;
const DialogTab = styled.button`
  width: ${(p) => (p.$on ? 51 : 46)}px;
  height: ${(p) => (p.$on ? 21 : 19)}px;
  padding: 0 14px 0 5px;
  border: 1px solid #d9d9d9;
  border-bottom: 0;
  background: ${(p) => (p.$on ? '#fff' : '#f0f0f0')};
  font-family: "Noto Sans CJK SC", sans-serif;
  line-height: 18px;
`;
const Page = styled.div`
  display: flex;
  flex-direction: column;
  gap: 1px;
  flex: 1;
  min-height: 0;
  padding: 2px 4px 3px 5px;
  border: 1px solid #d9d9d9;
  background: #fff;
`;
const EditTools = styled.div`
  display: flex;
  align-items: center;
  flex: 0 0 27px;
  padding-left: 2px;
  background: linear-gradient(#fdfdfd, #efefef);
`;
const Grip = styled.span`
  width: 2px;
  height: 15px;
  margin-right: 2px;
  background: repeating-linear-gradient(#b5b5b5 0 2px, transparent 2px 4px);
`;
const EditTool = styled.button`
  height: 23px;
  padding: 0 4px;
  border: 1px solid ${(p) => (p.$on ? '#0078d7' : 'transparent')};
  background: ${(p) => (p.$on ? '#dfecf8' : 'none')};
  color: ${(p) => (p.disabled ? '#777' : '#000')};
`;
const EditRule = styled(Rule)`
  margin: 0 2px 0 3px;
`;
const RebarLabel = styled.label`
  padding: 0 1px 0 4px;
`;
const Combo = styled.div`
  display: grid;
  width: 135px;
  height: 25px;
  border: 1px solid #0078d7;
  background: linear-gradient(90deg, transparent 121px, #dfecf8 121px) #fff;
  align-items: center;
  > * { grid-area: 1 / 1; }
  > select { appearance: none; width: 100%; height: 100%; padding: 0 0 2px 2px; }
  > span { justify-self: end; margin-right: 3px; }
`;
const Canvas = styled.div`
  flex: 1;
  min-height: 0;
  margin-top: 2px;
  border: 2px solid #f00;
  background: #000;
  > svg { width: 100%; height: 100%; }
`;
const DialogStatus = styled.div`
  display: flex;
  gap: 3px;
  flex: 0 0 24px;
  padding-top: 3px;
  background: #fff;
  font-family: "Noto Sans CJK SC", sans-serif;
`;
const Cell = styled.div`
  display: flex;
  align-items: center;
  flex: ${(p) => (p.$width ? `0 0 ${p.$width}px` : '1 1 0')};
  padding-left: ${(p) => p.$pad ?? 1}px;
  border: 1px solid #d9d9d9;
  background: linear-gradient(#fdfdfd, #efefef);
  overflow: hidden;
  > svg { margin-left: auto; }
`;
const Marks = styled.svg`
  position: absolute;
  top: 0;
  left: 0;
  overflow: visible;
  pointer-events: none;
`;

/* ---------- status bar and taskbar ---------- */

const StatusBar = styled.footer`
  display: flex;
  gap: 3px;
  flex: 0 0 20px;
  background: #fff;
  font-family: ${song};
`;
const Taskbar = styled.footer`
  display: flex;
  align-items: stretch;
  flex: 0 0 40px;
  background: #020b0e;
  color: #fff;
`;
const StartButton = styled.button`
  display: grid;
  place-items: center;
  width: 48px;
  background: #000;
`;
const SearchBox = styled.div`
  display: flex;
  align-items: center;
  gap: 7px;
  width: 344px;
  padding: 0 13px 0 9px;
  background: #333;
  > input { flex: 1; min-width: 0; font-size: 14px; }
  > input::placeholder { color: #9d9d9d; opacity: 1; }
`;
const Task = styled.button`
  display: grid;
  place-items: center;
  width: ${(p) => p.$width - (p.$open ? 8 : 0)}px;
  margin: 0 ${(p) => (p.$open ? 4 : 0)}px;
  padding-top: 3px;
  border-bottom: 3px solid ${(p) => (p.$open || p.$active ? '#76b9ed' : 'transparent')};
  background: ${(p) => (p.$active ? '#343c40' : 'none')};
`;
const Tray = styled.div`
  display: flex;
  align-items: center;
  gap: ${(p) => p.$gap}px;
  margin-left: ${(p) => p.$left || 0}px;
`;
const TwoLines = styled.div`
  display: flex;
  flex-direction: column;
  justify-content: center;
  line-height: 18px;
  text-align: center;
  margin-left: ${(p) => p.$left}px;
`;

/* ---------- data ---------- */

const menus = ['文件(F)', '编辑(E)', '楼层(L)', '构件(N)', '绘图(D)', '修改(M)', '钢筋量(Q)', '视图(V)', '工具(T)', '云应用(Y)', 'BIM应用(I)', '在线服务(S)', '帮助(H)', '版本号(B)'];

const modules = [
  [2, 'beam', '梁(L)'], [2, 'plate', '现浇板(B)', 'last'],
  [1, 'folder', '轴线'],
  [1, 'folderOpen', '柱'],
  [2, 'column', '框柱(Z)'], [2, 'column', '暗柱(Z)', 'on'], [2, 'column', '端柱(Z)'], [2, 'gearCol', '构造柱(Z)', 'last'],
  [1, 'folderOpen', '墙'],
  [2, 'shear', '剪力墙(Q)'], [2, 'niche', '人防门框墙(RF'], [2, 'brick', '砌体墙(Q)'], [2, 'hiddenBeam', '暗梁(A)'], [2, 'rebarWall', '砌体加筋(Y)', 'last'],
  [1, 'folderOpen', '门窗洞'],
  [2, 'door', '门(M)'], [2, 'win', '窗(C)'], [2, 'doorWin', '门联窗(A)'], [2, 'wallHole', '墙洞(D)'], [2, 'niche', '壁龛(I)'],
  [2, 'linkBeam', '连梁(G)'], [2, 'lintel', '过梁(G)'], [2, 'stripHole', '带形洞'], [2, 'stripWin', '带形窗', 'last'],
  [1, 'folderOpen', '梁'],
  [2, 'beam', '梁(L)'], [2, 'ringBeam', '圈梁(E)', 'last'],
  [1, 'folder', '板'],
  [1, 'folderOpen', '基础'],
  [2, 'hiddenBeam', '基础梁(F)'],
];

const parts = ['KZ-1', 'KZ-2', 'AZ-1', 'AZ-2', 'AZ-3', 'KZ-3', 'AZ-4', 'AZ-5', 'AZ-6', 'AZ-7', 'AZ-8', 'AZ-9'];

const properties = [
  [1, '名称', 'on'], [2, '类别', 'blue'], [3, '截面编辑', 'blue'], [4, '截面形状', 'black'],
  [5, '截面宽(B边)(mm)', 'gray'], [6, '截面高(H边)(mm)', 'gray'], [7, '全部纵筋', 'gray'],
  [8, '其它箍筋', 'blue'], [9, '备注', 'black'],
  [10, '芯柱', 'gray', true], [15, '其它属性', 'gray', true], [27, '锚固搭接', 'gray', true], [42, '显示样式', 'gray', true],
];

const tasks = [
  ['taskView', 48, 22], ['fan', 52, 22], ['eWhite', 51, 22], ['spiral', 49, 20], ['edge', 51, 22], ['ie', 43, 24],
  ['explorer', 43, 22], ['swirl', 42, 24, 'open'], ['app', 42, 24, 'active'], ['book', 42, 24, 'open'], ['note', 42, 24, 'open'], ['eGreen', 42, 22, 'open'],
];

/* ---------- section drawing ---------- */

const HDim = ({ x1, x2, y }) => (
  <path d={`M${x1} ${y}H${x2}M${x1} ${y - 9}v18M${x2} ${y - 9}v18M${x1 - 6} ${y + 6}l12-12M${x2 - 6} ${y + 6}l12-12`} />
);
const VDim = ({ x, y1, y2 }) => (
  <path d={`M${x} ${y1}V${y2}M${x - 9} ${y1}h18M${x - 9} ${y2}h18M${x - 6} ${y1 - 6}l13 13M${x - 6} ${y2 - 6}l13 13`} />
);

const bars = [
  ...[752, 795, 1252, 1295].flatMap((x) => [349, 555, 597].map((y) => [x, y])),
  [980, 555], [1067, 555], [980, 597], [1067, 597],
];
const dimTexts = [
  [764, 321, '200'], [1264, 321, '200'], [711, 477, '900'], [817, 448, '700'], [1212, 448, '700'], [1317, 477, '90'],
  [1012, 527, '1500'], [849, 633, '775'], [1180, 633, '775'], [939, 654, '300'], [1090, 654, '300'],
];

const Drawing = () => (
  <svg role="img" aria-label="暗柱截面配筋">
    <g transform="translate(-566 -247)" fill="none">
      <g stroke="#333" strokeDasharray="12 3 4 3" shapeRendering="crispEdges">
        {[847, 906, 965, 1082, 1141, 1200].map((x) => <path key={x} d={`M${x + 0.5} 247V665`} />)}
        {[253, 341, 429, 606].map((y) => <path key={y} d={`M844 ${y + 0.5}H1205`} />)}
        <path d="M1024.500 247V665M843 517.500H1205" stroke="#5c5c5c" />
      </g>
      <g stroke="#00ffff" strokeDasharray="3 3" shapeRendering="crispEdges">
        {[752, 795, 1252, 1295].map((x) => <path key={x} d={`M${x + 0.5} 349V597`} />)}
        <path d="M752 349.500H795M1252 349.500H1295M752 555.500H1295M752 597.500H1295M980.500 555V666M1067.500 555V666" />
      </g>
      <path d="M972 670V606H744V341H803V547H1244V341H1303V606H1075V670" stroke="#fff" strokeWidth="2" shapeRendering="crispEdges" />
      <path d="M1304 341L1330 315" stroke="#fff" />
      <g stroke="#00ff00" shapeRendering="crispEdges">
        <HDim x1={744.5} x2={803.5} y={329.5} />
        <HDim x1={1244.5} x2={1303.5} y={329.5} />
        <HDim x1={803.5} x2={1244.5} y={535.5} />
        <HDim x1={744.5} x2={972.5} y={617.5} />
        <HDim x1={1075.5} x2={1303.5} y={617.5} />
        <VDim x={732.5} y1={341.5} y2={606.5} />
        <VDim x={815.5} y1={341.5} y2={547.5} />
        <VDim x={1232.5} y1={341.5} y2={547.5} />
        <VDim x={1315.5} y1={341.5} y2={606.5} />
        <VDim x={960.5} y1={606.5} y2={700.5} />
        <VDim x={1087.5} y1={606.5} y2={700.5} />
      </g>
      {bars.map(([x, y]) => <circle key={`${x}-${y}`} cx={x} cy={y} r="2.500" stroke="#ff0" />)}
      {[401, 452, 504].map((y) => <path key={y} d={`M752 ${y - 3}l3 3-3 3-3-3z`} stroke="#f0f" />)}
      <g fill="#fff" fontFamily="Liberation Sans" fontSize="11">
        {dimTexts.map(([x, y, t]) => <text key={`${x}-${y}`} x={x} y={y}>{t}</text>)}
      </g>
    </g>
  </svg>
);

const ToolItem = ({ icon, text, off, caret }) => (
  <Tool disabled={off} aria-label={text || icon}>
    {icon && <Icon name={icon} />}
    {text}
    {caret && <Caret $off={off} />}
  </Tool>
);

const SectionEditor = () => (
  <Dialog role="dialog" aria-label="截面编辑">
    <DialogTitle>截面编辑</DialogTitle>
    <DialogTabs>
      <DialogTab>截面</DialogTab>
      <DialogTab $on>配筋</DialogTab>
    </DialogTabs>
    <Page>
      <EditTools>
        <Grip />
        <EditTool>布角筋</EditTool>
        <EditTool $on>布边筋</EditTool>
        <EditTool>特殊布筋</EditTool>
        <EditTool>对齐钢筋</EditTool>
        <EditTool>画箍筋</EditTool>
        <EditRule />
        <EditTool>修改纵筋</EditTool>
        <EditTool>修改箍筋</EditTool>
        <EditTool>编辑弯钩</EditTool>
        <EditTool>端头伸缩</EditTool>
        <EditTool disabled>删除</EditTool>
      </EditTools>
      <EditTools>
        <Grip />
        <RebarLabel htmlFor="rebar">钢筋信息</RebarLabel>
        <Combo>
          <select id="rebar"><option>3C16</option></select>
          <Caret />
        </Combo>
      </EditTools>
      <Canvas><Drawing /></Canvas>
    </Page>
    <DialogStatus>
      <Cell $width={147} $pad={8}>(X: -1557 Y: 591)</Cell>
      <Cell>
        请在钢筋信息输入框中输入角筋的钢筋信息后，使用鼠标选择角筋之间的连线单击左键生成边筋或选择起点纵筋
        <svg width="12" height="12"><path d="M8 1h2M4 5h2M8 5h2M0 9h2M4 9h2M8 9h2" stroke="#aaa" strokeWidth="2" /></svg>
      </Cell>
    </DialogStatus>
    <Marks width="1" height="1" aria-hidden="true">
      <g transform="translate(-551 -134)" fill="none" stroke="#f00" strokeWidth="7">
        <ellipse cx="642" cy="188" rx="37" ry="23" />
        <ellipse cx="650" cy="232" rx="42" ry="17" />
        <ellipse cx="743" cy="442" rx="37" ry="79" />
      </g>
    </Marks>
  </Dialog>
);

export default function App() {
  return (
    <Window>
      <GlobalStyle />
      <TitleBar>
        <Icon name="app" />
        <span>广联达BIM钢筋算量软件 GGJ2013 - [C:\Users\Administrator.PC-20141127NRHM\Desktop\白龙村-2018-02-02-19-24-35</span>
        <WindowButtons>
          <button aria-label="最小化"><Icon name="winMin" /></button>
          <button aria-label="还原"><Icon name="winMax" /></button>
          <button aria-label="关闭"><Icon name="winClose" /></button>
        </WindowButtons>
      </TitleBar>

      <Bar $height={30}>
        <MenuStrip $plain $width={935} $gap={11} $pad={7}>
          {menus.map((m) => <Tool key={m}>{m}</Tool>)}
          <ToolItem icon="change" text="新建变更" caret />
          <ToolItem icon="mascot" text="广小二" />
        </MenuStrip>
        <Strip $width={187}><Hint href="#help">布角筋如何操作?</Hint></Strip>
        <Strip $gap={7}>
          <Tool><Icon name="user" />13907298339<Caret $space={4} /></Tool>
          <Tool>造价豆:0</Tool>
          <Tool aria-label="消息"><Icon name="bell" /></Tool>
          <More aria-label="更多"><Icon name="more" /></More>
        </Strip>
      </Bar>

      <Bar $height={31} $foot={2}>
        <Strip $width={150}>
          <ToolItem icon="newDoc" />
          <ToolItem icon="open" caret />
          <ToolItem icon="save" />
          <Rule $height={24} />
          <ToolItem icon="undo" caret />
          <More aria-label="更多"><Icon name="more" /></More>
        </Strip>
        <Strip $width={549}>
          <ToolItem icon="paint" text="绘图" />
          <ToolItem icon="sigma" text="汇总计算" />
          <ToolItem icon="cloud" text="云检查" />
          <ToolItem icon="slab" text="平齐板顶" off />
          <ToolItem icon="binoculars" text="查找图元" off />
          <ToolItem icon="glasses" text="查看钢筋量" off />
          <ToolItem icon="batch" text="批量选择" off />
          <More aria-label="更多"><Icon name="more" /></More>
        </Strip>
        <Strip $pad={2}>
          <ViewBox>
            <Icon name="flat" />
            <select aria-label="视图" disabled><option>二维</option></select>
            <Caret $off />
          </ViewBox>
          <ToolItem icon="cube" text="俯视" off caret />
          <ToolItem icon="orbit" text="动态观察" off />
          <ToolItem icon="local3d" text="局部三维" off />
          <Rule />
          <ToolItem icon="fullView" text="全屏" off />
          <ToolItem icon="zoom" text="缩放" off caret />
          <ToolItem icon="pan" text="平移" off caret />
          <ToolItem icon="rotate" text="屏幕旋转" off caret />
          <Rule />
          <ToolItem icon="floors" text="选择楼层" off />
          <More aria-label="更多"><Icon name="more" /></More>
        </Strip>
      </Bar>

      <Body>
        <Navigator>
          <NavTitle>
            <span>模块导航栏</span>
            <Icon name="pin" size={12} />
            <Icon name="close" size={12} />
          </NavTitle>
          <NavButton>工程设置</NavButton>
          <NavButton>绘图输入</NavButton>
          <NavTools>
            <button aria-label="展开"><Icon name="addNode" /></button>
            <button aria-label="折叠"><Icon name="delNode" /></button>
          </NavTools>
          <TreeBox>
            <Tree>
              {modules.map(([level, icon, text, state], i) => (
                <TreeRow key={i}>
                  {level === 1 ? (
                    <>
                      <Icon name={icon === 'folder' ? 'chevronRight' : 'chevronDown'} />
                      <Stub />
                      <Leaf><Icon name={icon} />{text}</Leaf>
                    </>
                  ) : (
                    <>
                      <Trunk $left={9} $width={19} />
                      <Branch $width={10} $last={state === 'last'} />
                      <Leaf $bg={state === 'on' ? '#d9d9d9' : ''}><Icon name={icon} />{text}</Leaf>
                    </>
                  )}
                </TreeRow>
              ))}
            </Tree>
            <Scroll>
              <Icon name="arrowUp" />
              <Space $size={44} />
              <Thumb $size={241} />
              <Space $size={151} />
              <Icon name="chevronDown" />
            </Scroll>
            <Scroll $across>
              <Icon name="arrowLeft" />
              <Thumb $size={102} />
              <Space $size={6} />
              <Icon name="arrowRight" />
            </Scroll>
            <Scroll />
          </TreeBox>
          <NavButton>单构件输入</NavButton>
          <NavButton>报表预览</NavButton>
        </Navigator>

        <Workspace>
          <Bar $height={28} $foot={2}>
            <Strip $gap={5}>
              <ToolItem icon="create" text="新建" caret />
              <ToolItem icon="remove" text="删除" />
              <ToolItem icon="copy" text="复制" />
              <ToolItem icon="rename" text="重命名" />
              <Rule />
              <label htmlFor="floor">楼层</label>
              <FloorBox>
                <select id="floor"><option>第6层</option></select>
                <Caret />
              </FloorBox>
              <Rule />
              <ToolItem icon="sort" text="排序" caret />
              <ToolItem icon="filter" text="过滤" caret />
              <Rule />
              <ToolItem icon="copyFloor" text="从其他楼层复制构件" />
              <ToolItem icon="copyFloor" text="复制构件到其他楼层" />
              <Rule />
              <ToolItem text="查找" caret />
              <Rule />
              <ToolItem icon="up" text="上移" />
              <ToolItem icon="down" text="下移" off />
            </Strip>
          </Bar>
          <Columns>
            <Parts>
              <SearchRow>
                <input type="search" aria-label="搜索构件" placeholder="搜索构件..." />
                <button aria-label="搜索"><Icon name="search" /></button>
              </SearchRow>
              <PartsTree>
                <TreeRow>
                  <Icon name="chevronDown" />
                  <Stub />
                  <Leaf $gap={3}><Icon name="column" />暗柱</Leaf>
                </TreeRow>
                {parts.map((p, i) => (
                  <TreeRow key={p}>
                    <Branch $left={27} $width={9} $last={i === parts.length - 1} />
                    <Leaf $pad={2} $gap={6} $bg={p === 'AZ-9' ? '#316ac5' : ''}><Icon name="gear" size={14} />{p}</Leaf>
                  </TreeRow>
                ))}
              </PartsTree>
            </Parts>
            <Properties>
              <TabStrip><PageTab>属性编辑</PageTab></TabStrip>
              <GridPane>
                <GridFrame>
                  <Grid>
                    <thead>
                      <tr><Head $width="22px" /><Head $width="190px">属性名称</Head><Head>属性值</Head></tr>
                    </thead>
                    <tbody>
                      {properties.map(([n, name, tone, group]) => (
                        <tr key={n}>
                          <NumCell $on={tone === 'on'}>{n}</NumCell>
                          <NameCell $tone={tone}>
                            <CellRow $plain={!group}>
                              {group && <Expand aria-label={`展开${name}`}>+</Expand>}
                              {name}
                            </CellRow>
                          </NameCell>
                          <NameCell $tone="black" />
                        </tr>
                      ))}
                    </tbody>
                  </Grid>
                  <Scroll>
                    <Icon name="arrowUp" />
                    <Thumb $size={309} />
                    <Space $size={220} />
                    <Icon name="chevronDown" />
                  </Scroll>
                </GridFrame>
              </GridPane>
              <SectionEditor />
            </Properties>
          </Columns>
        </Workspace>
      </Body>

      <StatusBar>
        <Cell $width={147} />
        <Cell $width={78}>层高:2.8m</Cell>
        <Cell $width={97}>底标高:17.55m</Cell>
        <Cell $width={47}>0</Cell>
        <Cell>名称在当前层当前构件类型下不允许重名</Cell>
        <Cell $width={70}>348.5 FPS</Cell>
      </StatusBar>

      <Taskbar>
        <StartButton aria-label="开始"><Icon name="start" /></StartButton>
        <SearchBox>
          <svg width="20" height="20"><circle cx="10" cy="10" r="8" fill="none" stroke="#fff" strokeWidth="3" /></svg>
          <input type="search" aria-label="搜索" placeholder="在这里输入你要搜索的内容" />
          <Icon name="micLine" />
        </SearchBox>
        {tasks.map(([icon, width, size, state]) => (
          <Task key={icon} aria-label={icon} $width={width} $open={state === 'open'} $active={state === 'active'}>
            <Icon name={icon} size={size} />
          </Task>
        ))}
        <Tray $left={12}>链接</Tray>
        <TwoLines $left={19}><span>16%</span><span>CPU使用</span></TwoLines>
        <Tray $gap={8} $left={16}>
          <Icon name="caret" />
          <Icon name="battery" />
          <Icon name="wifi" />
          <Icon name="speaker" />
        </Tray>
        <Tray $gap={12} $left={12}>
          <Icon name="keyLine" />
          <span>中</span>
          <SogouLogo $size={15}>S</SogouLogo>
        </Tray>
        <TwoLines $left={20}><span>14:38</span><span>2018/5/12</span></TwoLines>
        <Tray $left={24}><Icon name="notice" /></Tray>
      </Taskbar>

      <ImeBar>
        <LogoSpot><SogouLogo $size={25}>S</SogouLogo></LogoSpot>
        <span>中</span>
        <Icon name="comma" />
        <Icon name="smile" />
        <Icon name="mic" />
        <Icon name="keyboard" />
        <Icon name="person" />
        <Icon name="shirt" />
        <Icon name="wrench" />
      </ImeBar>
      <SpeedBall>63</SpeedBall>
    </Window>
  );
}
